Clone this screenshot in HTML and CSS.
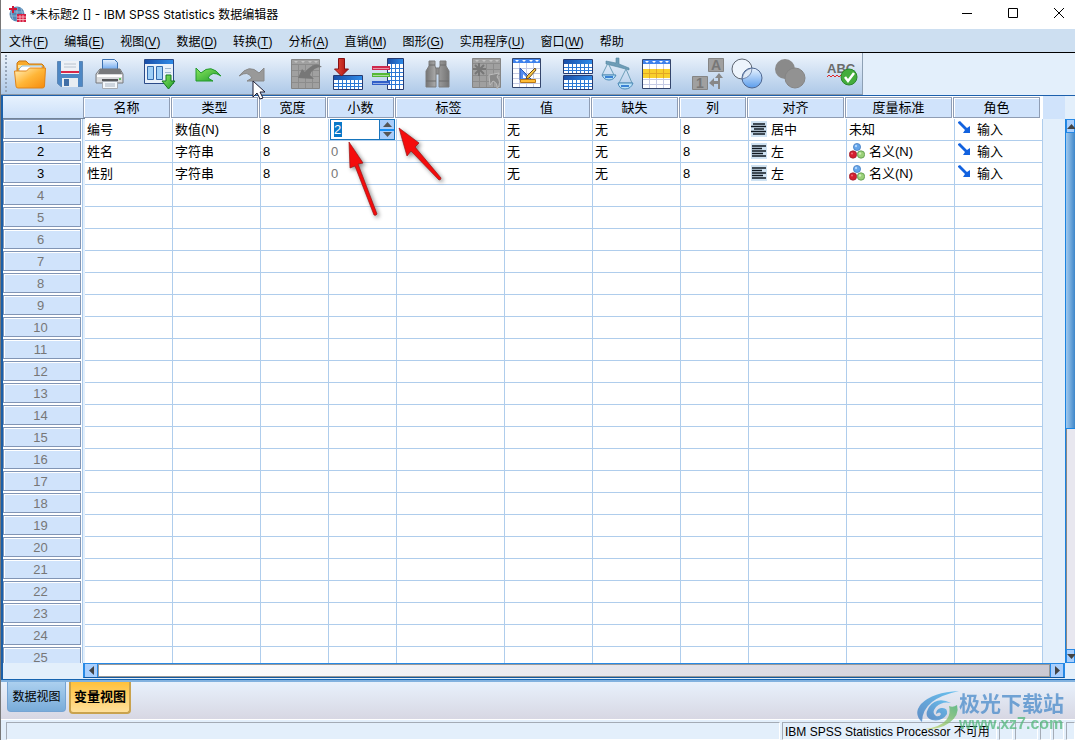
FILE: index.html
```html
<!DOCTYPE html>
<html lang="zh-CN">
<head>
<meta charset="utf-8">
<title>*未标题2 [] - IBM SPSS Statistics 数据编辑器</title>
<link rel="stylesheet" href="styles.css">
</head>
<body>
<svg class="defs" aria-hidden="true">
  <defs>
    <linearGradient id="blueHead" x1="0" x2="1"><stop offset="0" stop-color="#1a4fa8"/><stop offset="1" stop-color="#2f8be8"/></linearGradient>
    <linearGradient id="orange" x1="0" y1="0" x2="1" y2="1"><stop offset="0" stop-color="#fff3c4"/><stop offset=".5" stop-color="#ffb638"/><stop offset="1" stop-color="#f58a0c"/></linearGradient>
    <linearGradient id="green" x1="0" y1="0" x2="1" y2="1"><stop offset="0" stop-color="#8be860"/><stop offset="1" stop-color="#1e9a2a"/></linearGradient>
    <linearGradient id="red" x1="0" x2="1"><stop offset="0" stop-color="#e8503c"/><stop offset="1" stop-color="#a80c0c"/></linearGradient>
    <linearGradient id="sky" x1="0" y1="0" x2="0" y2="1"><stop offset="0" stop-color="#eaf4ff"/><stop offset="1" stop-color="#5a9cec"/></linearGradient>
    <linearGradient id="barrel" x1="0" x2="1"><stop offset="0" stop-color="#747474"/><stop offset=".4" stop-color="#a8a8a8"/><stop offset="1" stop-color="#747474"/></linearGradient>
    <linearGradient id="swoosh" x1="1" y1="0" x2="0" y2="1"><stop offset="0" stop-color="#40b4ee"/><stop offset="1" stop-color="#3a76bc"/></linearGradient>
    <linearGradient id="leaf" x1="1" y1="0" x2="0" y2="1"><stop offset="0" stop-color="#3fae68"/><stop offset="1" stop-color="#cfd668"/></linearGradient>
    <g id="miniTable"><path d="M.5.5h29v14h-29z" fill="#fff" stroke="#263a70"/><path d="M1 1h28v4H1z" fill="url(#blueHead)"/><path d="M1 8.500h28M1 11.500h28M5.500 5v9M9.500 5v9M13.500 5v9M17.500 5v9M21.500 5v9M25.500 5v9" stroke="#2b78d4"/></g>
    <g id="bigTable"><path d="M.5.5h28v29H.5z" fill="#fff" stroke="#34466c"/><path d="M1 1h27v4H1z" fill="#3f82ec"/><path d="M3 2h4L5 4zm7 0h4l-2 2zm7 0h4l-2 2zm6 0h4l-2 2z" fill="#fff"/><path d="M1 10.500h27M1 15.500h27M1 20.500h27M1 25.500h27M7.500 5v24M14.500 5v24M21.500 5v24" stroke="#c5cbe4"/></g>
    <g id="grayTable"><path d="M.5.5h28v29H.5z" fill="#a0a0a0" stroke="#858585"/><path d="M1 5.500h27M1 11.500h27M1 17.500h27M1 23.500h27M7.500 5v24M14.500 5v24M21.500 5v24" stroke="#8c8c8c"/><path d="M3 2h4L5 4zm7 0h4l-2 2zm7 0h4l-2 2zm6 0h4l-2 2z" fill="#c4c4c4"/></g>
    <symbol id="alignCenter" viewBox="0 0 16 16"><path fill="#cfe2f2" d="M0 0h16v16H0z"/><path d="M2 3h12M0 5.500h15M3 8h10M0 10.500h15M2 13h12" stroke="#101820" stroke-width="1.300"/></symbol>
    <symbol id="alignLeft" viewBox="0 0 16 16"><path fill="#cfe2f2" d="M0 0h16v16H0z"/><path d="M1 3h14M1 5.500h10M1 8h14M1 10.500h11M1 13h14" stroke="#101820" stroke-width="1.300"/></symbol>
    <symbol id="nominal" viewBox="0 0 16 16"><circle cx="8" cy="4" r="3.600" fill="#65a5e9" stroke="#3e77bb" stroke-width=".7"/><circle cx="4" cy="11.500" r="3.700" fill="#d51e30" stroke="#911e2c" stroke-width=".7"/><circle cx="12" cy="11.500" r="3.700" fill="#9ad078" stroke="#4e8c40" stroke-width=".7"/><circle cx="7" cy="3" r="1.200" fill="#b2d7ff"/><circle cx="3" cy="10.500" r="1" fill="#ee7078"/><circle cx="11" cy="10.500" r="1.200" fill="#d0efb8"/></symbol>
    <symbol id="role" viewBox="0 0 14 14"><path d="M1 1l2-1 7 7 3-2v7H6l2-3-7-7z" fill="#1262df"/></symbol>
  </defs>
</svg>

<header class="titlebar">
  <svg class="app-icon" viewBox="0 0 17 17"><circle cx="8" cy="8" r="7.500" fill="#5486b4"/><path d="M1 6h14M1 10h14M8 1v14M4 2q-3 6 0 12M12 2q3 6 0 12" fill="none" stroke="#a5c5dd" stroke-width=".7"/><path d="M0 3h8M4 0v7" stroke="#d01838" stroke-width="2"/><path d="M8 8h9v8H8z" fill="#d42043"/><path d="M8 11h9M8 13.500h9M11 9v7M14 9v7" stroke="#ffc6ce" stroke-width=".8"/></svg>
  <h1>*未标题2 [] - IBM SPSS Statistics 数据编辑器</h1>
  <div class="window-controls">
    <button aria-label="最小化"><svg viewBox="0 0 10 10"><path d="M0 5.500h10"/></svg></button>
    <button aria-label="最大化"><svg viewBox="0 0 10 10"><path d="M.5.500h9v9h-9z"/></svg></button>
    <button aria-label="关闭"><svg viewBox="0 0 10 10"><path d="M0 0l10 10M10 0L0 10"/></svg></button>
  </div>
</header>

<nav class="menubar">
  <button>文件(<u>F</u>)</button><button>编辑(<u>E</u>)</button><button>视图(<u>V</u>)</button><button>数据(<u>D</u>)</button><button>转换(<u>T</u>)</button><button>分析(<u>A</u>)</button><button>直销(<u>M</u>)</button><button>图形(<u>G</u>)</button><button>实用程序(<u>U</u>)</button><button>窗口(<u>W</u>)</button><button>帮助</button>
</nav>

<div class="toolbar-row">
<div class="toolbar">
  <div class="group">
    <button aria-label="打开"><svg viewBox="0 0 32 32"><path d="M3 28V5l2-2h7l3 3h13l2 2v20z" fill="#f9ab2c" stroke="#c87412"/><path d="M4 7h24v3H4z" fill="#ffe49a"/><path d="M5 11l3-3h20v6H5z" fill="#fff" stroke="#5aa0d8" stroke-width=".7"/><path d="M.5 13h12l3-3h16l-1 18q0 2-2 2H4q-2 0-2-2z" fill="url(#orange)" stroke="#e0851a"/></svg></button>
    <button aria-label="保存"><svg viewBox="0 0 32 32"><path d="M3.500 3.500h25v25H7l-3.500-3z" fill="#4d87c4" stroke="#5d87b5"/><path d="M7 3h18v13H7z" fill="#edf1f6"/><path d="M10 6h12M10 9h12" stroke="#b8c2ce"/><path d="M7 13h18v2H7z" fill="#d8284a"/><path d="M8 20h16v9H8z" fill="#e8edf2"/><path d="M10 21h5v7h-5z" fill="#416fa6"/></svg></button>
    <button aria-label="打印"><svg viewBox="0 0 32 32"><path d="M8.500 12V1.500h12l3 3V13" fill="url(#sky)" stroke="#3a70b0"/><path d="M6 11h20l3 5v9H2v-9z" fill="#d8dadc" stroke="#77797c"/><path d="M6 11h20l2 5H4z" fill="#77797c"/><path d="M3 17h25v2H3z" fill="#fff"/><circle cx="26" cy="21" r="1" fill="#37b838"/><path d="M8 21h16v2H8z" fill="#55575a"/><path d="M8.500 23.500h15v7h-15z" fill="#f4f8fc" stroke="#a6abb2"/><path d="M11 26h10M11 28h10" stroke="#a6b2c0"/></svg></button>
  </div>
  <div class="group">
    <button aria-label="重新调用对话框"><svg viewBox="0 0 32 32"><path d="M.5 1.500h29v24H.5z" fill="#e9f1fa" stroke="#2a4a88"/><path d="M1 2h28v4H1z" fill="url(#blueHead)"/><path d="M3.500 8.500h6v13h-6zM12.500 8.500h6v13h-6z" fill="#9fd0f8" stroke="#3369ab"/><path d="M21 10.500h6M21 14.500h6" stroke="#a0b8d0"/><path d="M22 17h5v6h4l-6.500 8-6.500-8h4z" fill="url(#green)" stroke="#167a20"/></svg></button>
  </div>
  <div class="group">
    <button aria-label="撤消"><svg viewBox="0 0 32 32"><path d="M2 10l5 5Q17 5 27 18q-9-6-13 2l5 3H2z" fill="url(#green)" stroke="#239a2c"/></svg></button>
    <button aria-label="重做"><svg viewBox="0 0 32 32"><path d="M30 10l-5 5Q15 5 5 18q9-6 13 2l-5 3h17z" fill="#999" stroke="#888"/></svg></button>
  </div>
  <div class="group wide">
    <button aria-label="转到个案"><svg viewBox="0 0 32 32"><use href="#grayTable" y="1"/><path d="M7 20l4-9 3 3Q24 2 31 9q-9 0-12 8l4 4z" fill="#777"/></svg></button>
    <button aria-label="转到变量"><svg viewBox="0 0 32 32"><use href="#miniTable" x="2" y="17"/><path d="M7.500.5h6V11h4L10.500 18l-7-7h4z" fill="url(#red)" stroke="#871012"/></svg></button>
    <button aria-label="变量"><svg viewBox="0 0 32 32"><path d="M16.500.5h16v31h-16z" fill="#fff" stroke="#263a70"/><path d="M17 1h15v5H17z" fill="url(#blueHead)"/><path d="M17 10.500h15M17 14.500h15M17 18.500h15M17 22.500h15M17 26.500h15M20.500 6v25M24.500 6v25M28.500 6v25" stroke="#2b78d4"/><path d="M1 8h18v4H1z" fill="#ce294d"/><path d="M1 15h18v4H1z" fill="#55b835"/><path d="M1 23h18v4H1z" fill="#315fc8"/><path d="M2 10.500h16M2 17.500h16M2 25.500h16" stroke="#fff" opacity=".5"/></svg></button>
  </div>
  <div class="group">
    <button aria-label="查找"><svg viewBox="0 0 32 32"><path d="M13 10h7v6h-7z" fill="#8c8c8c" stroke="#777"/><path d="M8 3h6v5l1 3v18H5V13l3-5zM19 3h6v5l3 5v16H18V11l1-3z" fill="url(#barrel)" stroke="#7c7c7c"/><path d="M8 7h6M19 7h6M5 23h10M18 23h10" stroke="#6c6c6c"/></svg></button>
  </div>
  <div class="group">
    <button aria-label="插入个案"><svg viewBox="0 0 32 32"><use href="#grayTable" x="1"/><path d="M8 5v13M2 11h13M4 7l9 9M13 7l-9 9" stroke="#777" stroke-width="2"/><path d="M18 17l10-2-2 4q5 5 0 12 1-6-4-8l-3 4z" fill="#888" stroke="#bbb"/></svg></button>
    <button aria-label="插入变量"><svg viewBox="0 0 32 32"><use href="#bigTable" x="1"/><path d="M9 10v12h12z" fill="#548bee" stroke="#2857b1"/><path d="M12 16v4h4z" fill="#fff"/><path d="M24 10l-8 8-1 3 3-1 7-8z" fill="#f5c545" stroke="#694a22"/><path d="M9.500 21.500h15v3h-15z" fill="#ffbd36" stroke="#b97716"/></svg></button>
  </div>
  <div class="group">
    <button aria-label="拆分文件"><svg viewBox="0 0 32 32"><use href="#miniTable" x="2" y="1"/><use href="#miniTable" x="2" y="17"/></svg></button>
    <button aria-label="加权个案"><svg viewBox="0 0 32 32"><path d="M5 3l10 2V0h3v6l10 4v2L17 9 5 6z" fill="#6e9db7" stroke="#4e839f" stroke-width=".6"/><path d="M7 5L1 17h12zM25 11l-7 14h13z" fill="none" stroke="#6d9fb8"/><path d="M1 17h14q-2 5-7 5t-7-5zM17 25h15q-2 6-8 6t-7-6z" fill="#b9e3f8" stroke="#4b88b6"/><path d="M4 19h8M20 28h8" stroke="#3b82d5" stroke-width="2"/></svg></button>
    <button aria-label="选择个案"><svg viewBox="0 0 32 32"><use href="#bigTable" x="1" y="1"/><path d="M2 11h27v9H2z" fill="#f9d02c"/><path d="M2 15.500h27M8.500 11v9M15.500 11v9M22.500 11v9" stroke="#e2a724"/></svg></button>
  </div>
  <div class="group">
    <button aria-label="值标签"><svg viewBox="0 0 32 32"><path d="M17.500.5h15v13h-15zM1.500 18.500h15v13h-15z" fill="#a0a0a0" stroke="#858585"/><text x="20" y="12">A</text><text x="5" y="30">1</text><path d="M27 31v-5h-4v3l-5-4 5-5v3h4v-3h-3l4-5 4 5h-3v11z" fill="#888"/></svg></button>
    <button aria-label="使用变量集"><svg viewBox="0 0 32 32"><circle cx="11" cy="11" r="10" fill="#edf4fc" stroke="#5c6470"/><circle cx="21" cy="20" r="10" fill="url(#sky)" stroke="#4d6690"/><path d="M11.200 21Q12 12 21 10q0 9-9.800 11z" fill="#dfe9f5" stroke="#4d6690" stroke-width=".7"/></svg></button>
    <button aria-label="显示所有变量"><svg viewBox="0 0 32 32"><circle cx="14" cy="11" r="10" fill="#8a8a8a"/><circle cx="24" cy="20" r="10" fill="#929292" stroke="#858585"/></svg></button>
  </div>
  <div class="group wide">
    <button aria-label="拼写检查"><svg viewBox="0 0 32 32"><text x="-1" y="15" class="abc">ABC</text><path d="M-1 19l2-2 2 2 2-2 2 2 2-2 2 2 2-2" fill="none" stroke="#e02626"/><circle cx="21" cy="19" r="8" fill="#44ad3c" stroke="#2b862c"/><path d="M17 19l3 4 6-8" fill="none" stroke="#fff" stroke-width="2.500"/></svg></button>
  </div>
</div>
</div>

<main class="workspace">
<div class="grid-pane">
<table class="variables">
<colgroup><col class="c-row"><col class="c-mid"><col class="c-mid"><col class="c-small"><col class="c-small"><col class="c-large"><col class="c-mid"><col class="c-mid"><col class="c-small"><col class="c-align"><col class="c-large"><col class="c-mid"><col></colgroup>
<thead><tr><th class="corner"></th><th><span>名称</span></th><th><span>类型</span></th><th><span>宽度</span></th><th><span>小数</span></th><th><span>标签</span></th><th><span>值</span></th><th><span>缺失</span></th><th><span>列</span></th><th><span>对齐</span></th><th><span>度量标准</span></th><th><span>角色</span></th><th></th></tr></thead>
<tbody>
<tr class="used"><th><span>1</span></th><td>编号</td><td>数值(N)</td><td>8</td><td class="editing"><div class="spinner"><label><input type="text" value="2" aria-label="小数"></label><div class="steps"><button aria-label="增加"><svg viewBox="0 0 9 5"><path d="M4.500 0L9 5H0z"/></svg></button><button aria-label="减少"><svg viewBox="0 0 9 5"><path d="M4.500 5L9 0H0z"/></svg></button></div></div></td><td></td><td>无</td><td>无</td><td>8</td><td><svg class="ic"><use href="#alignCenter"/></svg>居中</td><td>未知</td><td><svg class="ic role"><use href="#role"/></svg>输入</td><td></td></tr>
<tr class="used"><th><span>2</span></th><td>姓名</td><td>字符串</td><td>8</td><td class="off">0</td><td></td><td>无</td><td>无</td><td>8</td><td><svg class="ic"><use href="#alignLeft"/></svg>左</td><td><svg class="ic"><use href="#nominal"/></svg>名义(N)</td><td><svg class="ic role"><use href="#role"/></svg>输入</td><td></td></tr>
<tr class="used"><th><span>3</span></th><td>性别</td><td>字符串</td><td>8</td><td class="off">0</td><td></td><td>无</td><td>无</td><td>8</td><td><svg class="ic"><use href="#alignLeft"/></svg>左</td><td><svg class="ic"><use href="#nominal"/></svg>名义(N)</td><td><svg class="ic role"><use href="#role"/></svg>输入</td><td></td></tr>
<tr><th><span>4</span></th><td><td><td><td><td><td><td><td><td><td><td><td></tr>
<tr><th><span>5</span></th><td><td><td><td><td><td><td><td><td><td><td><td></tr>
<tr><th><span>6</span></th><td><td><td><td><td><td><td><td><td><td><td><td></tr>
<tr><th><span>7</span></th><td><td><td><td><td><td><td><td><td><td><td><td></tr>
<tr><th><span>8</span></th><td><td><td><td><td><td><td><td><td><td><td><td></tr>
<tr><th><span>9</span></th><td><td><td><td><td><td><td><td><td><td><td><td></tr>
<tr><th><span>10</span></th><td><td><td><td><td><td><td><td><td><td><td><td></tr>
<tr><th><span>11</span></th><td><td><td><td><td><td><td><td><td><td><td><td></tr>
<tr><th><span>12</span></th><td><td><td><td><td><td><td><td><td><td><td><td></tr>
<tr><th><span>13</span></th><td><td><td><td><td><td><td><td><td><td><td><td></tr>
<tr><th><span>14</span></th><td><td><td><td><td><td><td><td><td><td><td><td></tr>
<tr><th><span>15</span></th><td><td><td><td><td><td><td><td><td><td><td><td></tr>
<tr><th><span>16</span></th><td><td><td><td><td><td><td><td><td><td><td><td></tr>
<tr><th><span>17</span></th><td><td><td><td><td><td><td><td><td><td><td><td></tr>
<tr><th><span>18</span></th><td><td><td><td><td><td><td><td><td><td><td><td></tr>
<tr><th><span>19</span></th><td><td><td><td><td><td><td><td><td><td><td><td></tr>
<tr><th><span>20</span></th><td><td><td><td><td><td><td><td><td><td><td><td></tr>
<tr><th><span>21</span></th><td><td><td><td><td><td><td><td><td><td><td><td></tr>
<tr><th><span>22</span></th><td><td><td><td><td><td><td><td><td><td><td><td></tr>
<tr><th><span>23</span></th><td><td><td><td><td><td><td><td><td><td><td><td></tr>
<tr><th><span>24</span></th><td><td><td><td><td><td><td><td><td><td><td><td></tr>
<tr><th><span>25</span></th><td><td><td><td><td><td><td><td><td><td><td><td></tr>
</tbody>
</table>
</div>
<div class="vscroll"><button aria-label="向上滚动"><svg viewBox="0 0 9 5"><path d="M4.500 0L9 5H0z"/></svg></button><div class="thumb"></div><div class="track"></div><button aria-label="向下滚动"><svg viewBox="0 0 9 5"><path d="M4.500 5L9 0H0z"/></svg></button></div>
<div class="hscroll"><button aria-label="向左滚动"><svg viewBox="0 0 5 9"><path d="M0 4.500L5 0v9z"/></svg></button><div class="track"></div><button aria-label="向右滚动"><svg viewBox="0 0 5 9"><path d="M5 4.500L0 0v9z"/></svg></button></div>
</main>

<div class="tabs"><button>数据视图</button><button class="active">变量视图</button></div>
<footer class="status"><div class="message"></div><div class="processor">IBM SPSS Statistics Processor 不可用</div><div class="s1"></div><div class="s2"></div><div class="s3"></div><div class="s3"></div><div class="s3"></div></footer>

<svg class="pointer" viewBox="0 0 14 20" aria-hidden="true"><path d="M1 1v16l4-4 3 6 3-1-3-6h5z" fill="#fff" stroke="#1b1b30"/></svg>
<svg class="arrows" viewBox="0 0 110 100" aria-hidden="true"><path d="M9 16L23 37l-5 1 19 50q-1 2-3 1L15 40l-5 2zM59 2l20 15-4 4 26 31q0 2-2 2L71 25l-4 5z" fill="#f40c0c" stroke="#9c1414" stroke-width=".7"/></svg>
<aside class="watermark"><svg viewBox="0 0 42 40" aria-hidden="true"><path d="M42 0Q16 1 4 13q-8 10 1 18 0-12 10-20Q24 4 42 0z" fill="url(#swoosh)"/><path d="M34 12Q20 5 12 16q-6 10 3 13 10 2 15-6 1-7-6-6-5 1-5 6 4-3 5 0-1 3-5 2-5-3 0-9 6-6 15-4z" fill="url(#swoosh)"/><path d="M40 14q3 10-8 18Q22 39 8 38q16-2 22-10 4-6 2-13 4 2 8-1z" fill="url(#leaf)"/></svg><div><strong>极光下载站</strong><span>www.xz7.com</span></div></aside>
</body>
</html>
```

FILE: styles.css
```css
* { box-sizing: border-box; }
html, body { height: 100%; }
body {
  margin: 0;
  display: flex;
  flex-direction: column;
  position: relative;
  overflow: hidden;
  background: #e3effb;
  border-left: 1px solid #777;
  color: #000;
  font: 13px/20px "Liberation Sans", "Noto Sans CJK SC", sans-serif;
}
button { margin: 0; padding: 0; border: 0; background: none; color: inherit; font: inherit; }
svg { display: block; overflow: visible; }
.defs { position: absolute; width: 0; height: 0; }

.titlebar { display: flex; align-items: center; height: 29px; flex: none; padding-left: 8px; background: #fff; }
.app-icon { width: 17px; height: 17px; margin-right: 4px; }
.titlebar h1 { margin: 0; flex: 1; font: 12px/20px Inter, "Noto Sans CJK SC", sans-serif; }
.window-controls { display: flex; align-self: flex-start; margin-right: -6px; }
.window-controls button { width: 46px; height: 26px; display: grid; place-items: center; }
.window-controls button:last-child { width: 45px; }
.window-controls svg { width: 10px; height: 10px; fill: none; stroke: #000; }

.menubar { display: flex; gap: 16px; height: 24px; flex: none; padding: 3px 0 0 8px; background: #cddff1; border-bottom: 1px solid #000; font-size: 12px; }
.menubar button { line-height: 20px; white-space: nowrap; }
.menubar u { text-underline-offset: 2px; }

.toolbar-row { display: flex; flex: none; }
.toolbar { display: flex; gap: 18px; height: 42px; padding: 5px 2px 0 13px; position: relative; background: linear-gradient(#edf4fc, #aec9e8); border-right: 1px solid #8da0b4; border-bottom: 1px solid #8c98a6; }
.toolbar::before { content: ""; position: absolute; left: 4px; top: 2px; bottom: 2px; border-left: 2px dotted #96a5b8; }
.group { display: flex; gap: 8px; }
.group.wide { margin-left: 7px; }
.group button { width: 32px; height: 32px; }
.group svg { width: 32px; height: 32px; }
.group text { font: bold 14px "Liberation Sans", sans-serif; fill: #777; }
.group text.abc { font-size: 13px; fill: #6a6a6a; }

.workspace { flex: 1; min-height: 0; display: grid; grid-template: minmax(0, 1fr) 16px / minmax(0, 1fr) 10px; border-left: 2px solid #1b5fa8; border-top: 1px solid #1c60ad; border-bottom: 1px solid #1764af; }
.grid-pane { overflow: hidden; }
.variables { width: 100%; table-layout: fixed; border-collapse: separate; border-spacing: 0; }
.c-row { width: 82px; }
.c-mid { width: 88px; }
.c-small { width: 68px; }
.c-large { width: 108px; }
.c-align { width: 98px; }
.variables th, .variables td { padding: 0; height: 22px; font-weight: normal; }
.variables thead th { height: 23px; background: #fff; }
.variables thead th:last-child { background: #d0e3fb; }
.variables thead span { display: block; height: 21px; margin: 1px 3px 1px -2px; border: 1px solid #8f9db4; background: #d0e3fb; box-shadow: inset 1px 1px #fff; line-height: 20px; }
.variables thead .corner { background: linear-gradient(#e7f2fe, #cce0f9); border-bottom: 1px solid #738397; }
.variables tbody th { background: linear-gradient(to right, #fff 79px, #a9c9ea 79px 80px, #e3effb 80px); color: #777; vertical-align: top; }
.variables tbody th span { display: block; width: 78px; height: 20px; border: 1px solid #8195b5; background: #d0e3fb; box-shadow: inset 1px 1px #fff; line-height: 20px; padding-right: 3px; }
.variables .used th { color: #000; }
.variables td { background: #fff; border-right: 1px solid #afcdec; border-bottom: 1px solid #afcdec; padding-left: 2px; line-height: 20px; white-space: nowrap; }
.variables td:last-child { background: none; border: 0; }
.variables td.off { color: #777; }
.ic { display: inline-block; width: 16px; height: 16px; margin-right: 4px; vertical-align: -3px; }
.ic.role { width: 14px; height: 14px; margin-right: 6px; vertical-align: -1px; }
.variables td.editing { padding: 0; }
.spinner { display: flex; height: 21px; margin: 0 1px; border: 1px solid #1675bd; }
.spinner label { flex: 1; background: #fff; padding: 1px 3px; display: flex; align-items: center; }
.spinner input { width: 8px; height: 15px; padding: 0; border: 0; background: #0878c8; color: #fff; font: inherit; }
.steps { width: 15px; display: flex; flex-direction: column; border-left: 1px solid #1b75bd; }
.steps button { flex: 1; display: grid; place-items: center; background: #a9cdfa; }
.steps button + button { border-top: 2px solid #168ff5; }
.steps svg { width: 9px; height: 5px; fill: #555; }

.vscroll { display: flex; flex-direction: column; margin-top: 23px; border-left: 1px solid #1b83e0; overflow: hidden; }
.vscroll button, .hscroll button { display: grid; place-items: center; background: #a9cffd; border: 1px solid #2789e5; flex: none; }
.vscroll button { height: 14px; }
.vscroll svg { width: 9px; height: 5px; fill: #444; }
.vscroll .thumb { flex: 295; background: linear-gradient(to right, #a2c9ed, #3e87ca); border-bottom: 1px solid #1685e5; }
.vscroll .track { flex: 220; border-left: 1px solid #888; background: #e8e7ef; }
.hscroll { display: flex; grid-column: 1; height: 15px; margin-left: 80px; border: 1px solid #2789e5; border-bottom-color: #12589e; }
.hscroll button { width: 14px; border-width: 0 1px; }
.hscroll svg { width: 5px; height: 9px; fill: #444; }
.hscroll .track { flex: 1; border: 1px solid #999; background: linear-gradient(to right, #fff, #fff 8%, #dddce4 70%, #cbc9d2); }

.tabs { display: flex; align-items: flex-start; gap: 3px; height: 39px; flex: none; padding-left: 6px; border-top: 2px solid #82b2df; background: linear-gradient(#e8f1fc, #d7d7e3); }
.tabs button { height: 30px; width: 59px; border: 1px solid #75a4d3; border-top: 0; border-radius: 0 0 4px 4px; background: linear-gradient(#acd0ef, #79acd9); font-size: 12px; }
.tabs .active { width: 62px; height: 32px; border: 2px solid #c9a24d; border-top: 0; background: linear-gradient(#ffc13c, #ffe09a); font-size: 13px; font-weight: bold; }

.status { display: flex; gap: 2px; height: 21px; flex: none; padding: 2px 0 0 5px; border-top: 1px solid #fff; }
.status div { border: 1px solid #a4abb5; border-right-color: #fff; border-bottom-color: #fff; }
.status .message { flex: 1; }
.status .processor { width: 215px; padding-left: 2px; line-height: 18px; white-space: nowrap; font-size: 12px; }
.status .s1 { width: 14px; }
.status .s2 { width: 23px; }
.status .s3 { width: 11px; }
.status .s3:last-child { width: 9px; }

.pointer { position: absolute; left: 251px; top: 80px; width: 14px; height: 20px; }
.arrows { position: absolute; left: 339px; top: 126px; width: 110px; height: 100px; filter: drop-shadow(2px 2px 2px #888); }
.watermark { position: absolute; right: 11px; bottom: 5px; display: flex; align-items: flex-start; opacity: .75; pointer-events: none; }
.watermark svg { width: 42px; height: 40px; }
.watermark div { display: flex; flex-direction: column; }
.watermark strong { font: bold 21px/22px "Noto Sans CJK SC", sans-serif; color: #4a8bca; }
.watermark span { font: bold 16px/22px "Liberation Sans", sans-serif; color: #53b87c; }
```
